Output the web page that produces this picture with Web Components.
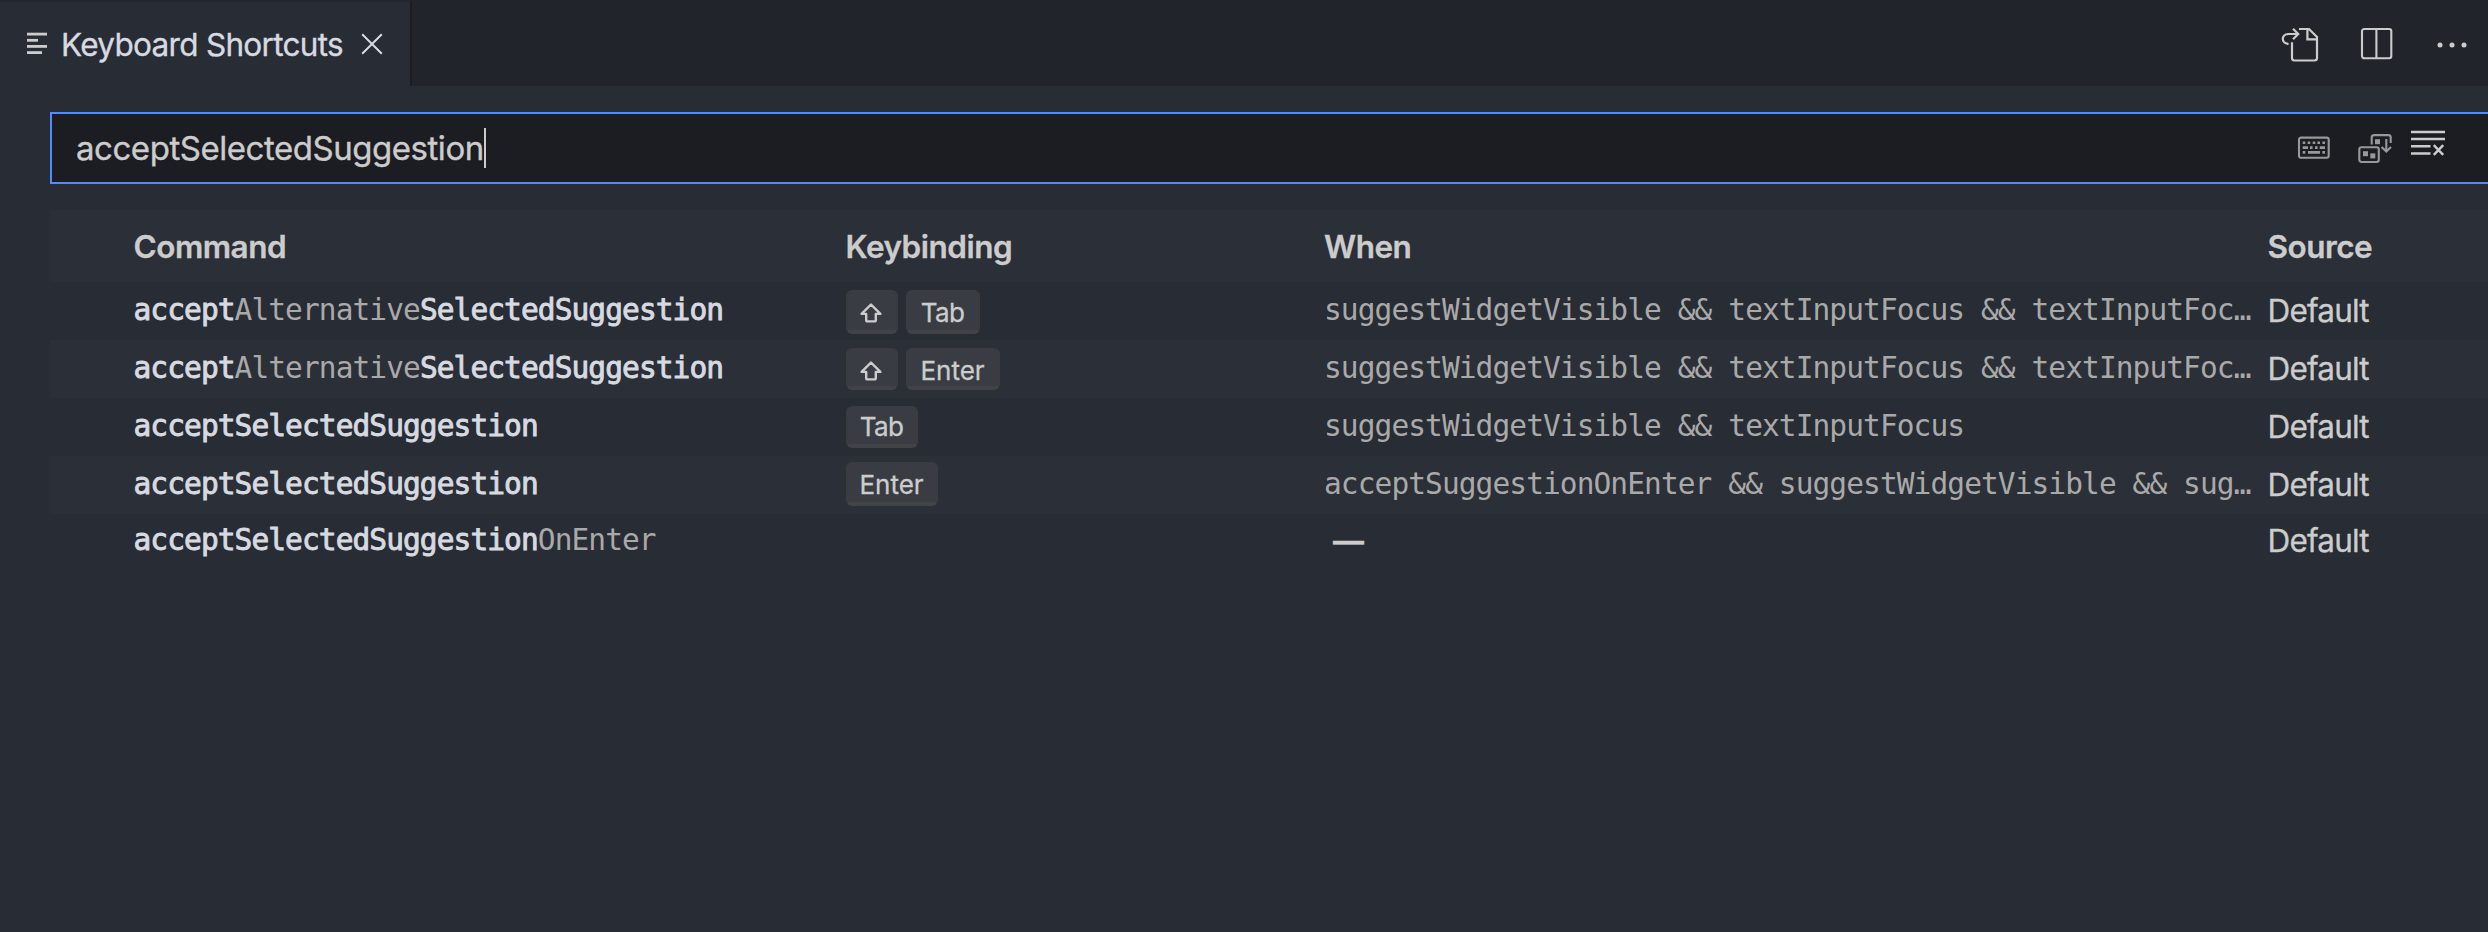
<!DOCTYPE html>
<html lang="en"><head><meta charset="utf-8"><title>Keyboard Shortcuts</title>
<style>
html,body{margin:0;height:100%;overflow:hidden;background:#282c34}
body{font-family:Inter,"Liberation Sans",sans-serif;color:#ccc}
</style></head><body>
<script>
const define=(name,html)=>customElements.define(name,class extends HTMLElement{
  connectedCallback(){
    if(this.shadowRoot)return;
    const root=this.attachShadow({mode:'open'});
    root.innerHTML=typeof html==='function'?html(this):html;
  }
});

const icons={
list:[20,22,`<g fill="#ccc"><rect y="1.7" width="20" height="2.8"/><rect y="7.9" width="11" height="2.8"/><rect y="14" width="20" height="2.8"/><rect y="20.2" width="15" height="2.8"/></g>`],
close:[22,22,`<path d="M1.2 1.2l19.6 19.6M20.8 1.2L1.2 20.8" stroke="#d7dae0" stroke-width="2"/>`],
file:[40,40,`<path d="M12 18.3V34q0 2.5 2.5 2.5h20q2.5 0 2.5-2.5V13l-8-8H19M27.4 5v10.3H37M8.6 20C.8 19.6.8 10 8.6 10H17.5M13 4.8l5.2 5.2-5.2 5.2" stroke="#ccc" stroke-width="2.2"/>`],
split:[34,34,`<rect x="2" y="2" width="29.3" height="29.3" rx="2.2" stroke="#ccc" stroke-width="2.1"/><path d="M16.4 2v29" stroke="#ccc" stroke-width="2.1"/>`],
more:[30,10,`<g fill="#ccc"><circle cx="3" cy="5" r="2.5"/><circle cx="15" cy="5" r="2.5"/><circle cx="27" cy="5" r="2.5"/></g>`],
keyboard:[36,28,`<rect x="3" y="3.6" width="29.7" height="20.2" rx="2" stroke="#97989a" stroke-width="2.1"/><g stroke="#97989a" stroke-width="2.6"><path d="M6.7 8.7h2.6M11.7 8.7h2.6M16.7 8.7h2.6M21.4 8.7H24M26.4 8.7H29M6.7 13.6H12M14 13.6h2.6M19 13.6h2.6M23.7 13.6H29M6.7 18.4h2.6M12 18.4h12M26.4 18.4H29"/></g>`],
sort:[38,34,`<g stroke="#97989a" stroke-width="2.1"><rect x="3.3" y="15.3" width="19.5" height="14.7" rx="2.2"/><path d="M15.7 12.6V5.5q0-2.4 2.4-2.4h14.2q2.4 0 2.4 2.4v5.5M30.3 7v12.3M25.6 14.9l4.7 4.7 4.7-4.7"/></g><g fill="#97989a"><rect x="7" y="19.2" width="5" height="5"/><rect x="14.3" y="21.4" width="5" height="5"/><rect x="19" y="7.2" width="5" height="5"/></g>`],
clear:[34,26,`<g stroke="#ccc" stroke-width="2.5"><path d="M0 1.9h34M0 9.1h34M0 16.3h19.5M0 23.5h19.5"/><path d="M22.8 15.2l9.4 9.6M32.2 15.2l-9.4 9.6" stroke-width="2.4"/></g>`],
shift:[22,20,`<path d="M11 1.5L1.6 10.9H6.2V17q0 1.4 1.4 1.4h6.8q1.4 0 1.4-1.4V10.9h4.6z" stroke="#ccc" stroke-width="2.4" stroke-linejoin="round"/>`]
};
define('ks-icon',el=>{const[w,h,b]=icons[el.getAttribute('name')];
  return `<style>:host{display:block;flex:none;width:${w}px;height:${h}px}svg{display:block;overflow:visible}</style><svg width="${w}" height="${h}" viewBox="0 0 ${w} ${h}" fill="none">${b}</svg>`});

define('ks-tab',`<style>
:host{display:flex;box-sizing:border-box;width:412px;height:86px;padding-left:27px;background:#282c34;border-top:2px solid #23272e;border-right:2px solid #1b1d23;color:#d7dae0}
.list{margin-top:29px}
.title{margin-left:14px;width:287px;white-space:nowrap;font-size:31.5px;-webkit-text-stroke:.35px;line-height:86px;letter-spacing:-.7px}
.close{margin:31px 0 0 13px}
</style><ks-icon class="list" name="list"></ks-icon><span class="title"><slot></slot></span><ks-icon class="close" name="close"></ks-icon>`);

define('ks-tabbar',`<style>
:host{display:flex;justify-content:space-between;height:86px;background:#21252b}
.actions{display:flex;padding-right:21px}
.file{margin:24px 40px 0 0}.split{margin:27px 43px 0 0}.more{margin-top:40px}
</style><slot></slot><div class="actions"><ks-icon class="file" name="file"></ks-icon><ks-icon class="split" name="split"></ks-icon><ks-icon class="more" name="more"></ks-icon></div>`);

define('ks-search',`<style>
:host{display:flex;box-sizing:border-box;height:72px;margin:26px 0 0 50px;border:2px solid #528bff;border-right:0;background:#1c1d22;padding-left:24px}
.text{font-size:33px;-webkit-text-stroke:.35px;line-height:68px;letter-spacing:-.46px;width:408px;white-space:nowrap}
.caret{width:2px;height:40px;margin:14px auto 0 0;background:#ccc}
.kb{margin:20px 24px 0 0}.sort{margin:18px 17px 0 0}.clear{margin:16px 43px 0 0}
</style><span class="text"><slot></slot></span><span class="caret"></span>
<ks-icon class="kb" name="keyboard"></ks-icon><ks-icon class="sort" name="sort"></ks-icon><ks-icon class="clear" name="clear"></ks-icon>`);

define('ks-key',`<style>
:host{display:flex;box-sizing:border-box;justify-content:center;width:var(--w);height:var(--h,44px);margin-right:8px;border:2px solid #3b3c3f;border-bottom:4px solid #424346;border-radius:6px;background:#3a3c43;font-size:26px;-webkit-text-stroke:.3px;line-height:calc(var(--l,45px) - 4px);letter-spacing:var(--s,0)}
::slotted(ks-icon){margin:11px 2px 0 0}
</style><slot></slot>`);

define('ks-row',`<style>
:host{display:grid;grid-template-columns:712px 478.5px 943.5px 1fr;height:58px;padding-left:83.5px;white-space:nowrap;font-size:31.5px;-webkit-text-stroke:.3px;line-height:57px;letter-spacing:-.8px}
:host([alt]){background:#2b2f37}
:host([head]){height:72px;line-height:73px;font-weight:600;letter-spacing:-.5px;-webkit-text-stroke:.3px;background:#2b2f37}
:host([last]){line-height:54px}
</style><slot></slot>`);

define('ks-code',`<style>
:host{display:block;font:29.5px/56px "DejaVu Sans Mono","Liberation Mono",monospace;letter-spacing:-.915px;color:#a9a9a9;-webkit-text-stroke:0}
:host([low]){line-height:53px}
::slotted(b){font-weight:400;color:#d7dae0;-webkit-text-stroke:.9px #d7dae0}
</style><slot></slot>`);

define('ks-keys',`<style>:host{display:flex;align-items:flex-start;padding-top:var(--t,8px)}</style><slot></slot>`);

define('ks-table',`<style>:host{display:block;margin:26px 0 0 50px}</style><slot></slot>`);

define('ks-app',`<style>:host{display:block}.dash{font-size:31px;font-weight:600;padding-left:9px;line-height:54px}</style>
<ks-tabbar><ks-tab>Keyboard Shortcuts</ks-tab></ks-tabbar>
<ks-search>acceptSelectedSuggestion</ks-search>
<ks-table>
<ks-row head><span>Command</span><span>Keybinding</span><span>When</span><span>Source</span></ks-row>
<ks-row><ks-code><b>accept</b>Alternative<b>SelectedSuggestion</b></ks-code><ks-keys><ks-key style="--w:52px"><ks-icon name="shift"></ks-icon></ks-key><ks-key style="--w:74px;--s:-.6px">Tab</ks-key></ks-keys><ks-code>suggestWidgetVisible &amp;&amp; textInputFocus &amp;&amp; textInputFoc…</ks-code><span>Default</span></ks-row>
<ks-row alt><ks-code><b>accept</b>Alternative<b>SelectedSuggestion</b></ks-code><ks-keys><ks-key style="--w:52px;--h:42px"><ks-icon name="shift"></ks-icon></ks-key><ks-key style="--w:94px;--h:42px">Enter</ks-key></ks-keys><ks-code>suggestWidgetVisible &amp;&amp; textInputFocus &amp;&amp; textInputFoc…</ks-code><span>Default</span></ks-row>
<ks-row><ks-code><b>acceptSelectedSuggestion</b></ks-code><ks-keys><ks-key style="--w:72px;--h:42px;--l:41px;--s:-.6px">Tab</ks-key></ks-keys><ks-code>suggestWidgetVisible &amp;&amp; textInputFocus</ks-code><span>Default</span></ks-row>
<ks-row alt><ks-code><b>acceptSelectedSuggestion</b></ks-code><ks-keys style="--t:6px"><ks-key style="--w:92px">Enter</ks-key></ks-keys><ks-code>acceptSuggestionOnEnter &amp;&amp; suggestWidgetVisible &amp;&amp; sug…</ks-code><span>Default</span></ks-row>
<ks-row last><ks-code low><b>acceptSelectedSuggestion</b>OnEnter</ks-code><span></span><span class="dash">—</span><span>Default</span></ks-row>
</ks-table>`);
</script>
<ks-app></ks-app>
</body></html>
